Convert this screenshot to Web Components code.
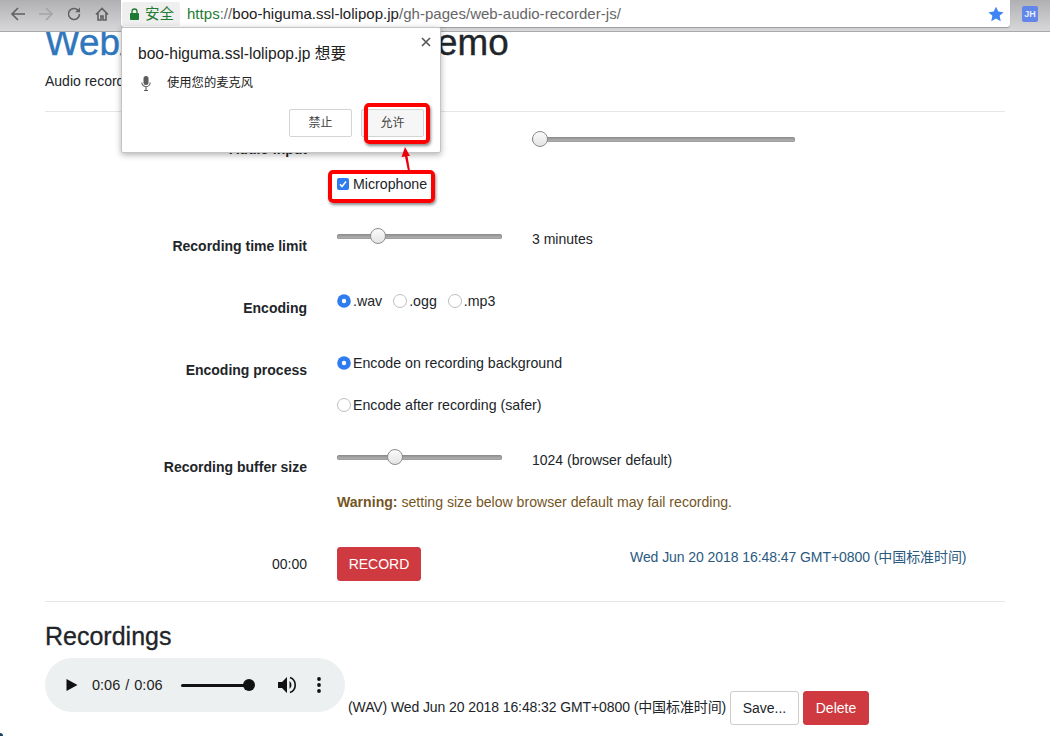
<!DOCTYPE html>
<html>
<head>
<meta charset="utf-8">
<title>Web audio recorder</title>
<style>
  html, body { margin: 0; height: 100%; overflow: hidden; background: #fff; }
  body { font: 14px/20px "Liberation Sans", "Noto Sans CJK SC", sans-serif; color: #212529; position: relative; }
  .speck { position: absolute; left: 0; top: 733px; width: 3px; height: 3px; border-radius: 0 3px 0 0; background: #17435f; }
</style>
</head>
<body>
<browser-bar></browser-bar>
<recorder-page></recorder-page>
<permission-popup></permission-popup>
<div class="speck"></div>
<script>
class BrowserBar extends HTMLElement {
  constructor() {
    super();
    this.attachShadow({mode: 'open'}).innerHTML = `
    <style>
      :host { display: flex; position: relative; z-index: 2; height: 32px; box-sizing: border-box;
        background: linear-gradient(#b0b0b2, #d8d8da); border-bottom: 1px solid #a9a9ab; }
      .nav { width: 121px; display: flex; align-items: center; padding-bottom: 4px; box-sizing: border-box; padding-left: 10px; gap: 12px; }
      .nav svg { width: 16px; height: 16px; fill: none; stroke: #5f6063; stroke-width: 1.6; flex: none; }
      .nav svg.off { stroke: #a5a5a8; }
      .omni { flex: 1; height: 27px; background: #fff; border-radius: 0 0 3px 3px; display: flex; align-items: center;
        box-shadow: 0 1px 1px #9a9a9c; font-size: 15px; color: #666; }
      .chip { width: 58px; height: 24px; margin: 0 7px 0 1px; background: #efefef; border-radius: 2px; display: flex; align-items: center; box-sizing: border-box; padding-left: 8px; gap: 6px; color: #1e7b34; font-size: 14.5px; }
      .green { color: #1e7b34; }
      .host { color: #222; }
      .url { flex: 1; letter-spacing: .03px; }
      .star { width: 16px; height: 16px; fill: #3f86f4; margin-right: 6px; }
      .ext { width: 40px; display: flex; align-items: center; justify-content: center; padding-bottom: 4px; }
      .badge { width: 16px; height: 16px; border-radius: 2px; background: #6286ea; color: #e8eeff; font: bold 9px/16px "Liberation Sans", sans-serif; text-align: center; }
    </style>
    <div class="nav">
      <svg viewBox="0 0 16 16"><path d="M15 8H2M8 2 2 8l6 6"/></svg>
      <svg class="off" viewBox="0 0 16 16"><path d="M1 8h13M8 2l6 6-6 6"/></svg>
      <svg viewBox="0 0 16 16"><path d="M13.5 8a5.5 5.5 0 1 1-1.6-3.9L13.5 6"/><path d="M14 1.5V6.3H9.2" fill="#5f6063" stroke="none"/></svg>
      <svg viewBox="0 0 16 16"><path d="M2 8.5 8 2.5l6 6M4 7v7h3v-4h2v4h3V7"/></svg>
    </div>
    <div class="omni">
      <div class="chip">
        <svg width="9" height="12" viewBox="0 0 9 12"><path d="M2 5V3.500a2.500 2.500 0 0 1 5 0V5" fill="none" stroke="#1e7b34" stroke-width="1.300"/><rect y="5" width="9" height="7" rx="1" fill="#1e7b34"/></svg>
        <span>安全</span>
      </div>
      <div class="url"><span class="green">https</span>://<span class="host">boo-higuma.ssl-lolipop.jp</span>/gh-pages/web-audio-recorder-js/</div>
      <svg class="star" viewBox="0 0 24 24"><path d="M12 1l3.400 7.400 8 .9-6 5.400 1.700 8L12 18.700 4.900 22.700l1.700-8-6-5.400 8-.9z"/></svg>
    </div>
    <div class="ext"><div class="badge">JH</div></div>`;
  }
}

class RangeSlider extends HTMLElement {
  constructor() {
    super();
    this.attachShadow({mode: 'open'}).innerHTML = `
    <style>
      :host { display: block; position: relative; height: 20px; width: var(--w, 165px); flex: none; }
      .track { position: absolute; left: 0; right: 0; top: 7.500px; height: 5px; border-radius: 3px; background: linear-gradient(#8e8e8e, #b9b9b9); box-shadow: inset 0 0 0 .5px #8a8a8a; }
      .thumb { position: absolute; top: 2px; width: 16px; height: 16px; box-sizing: border-box; border-radius: 50%; border: 1px solid #8d8d8d; background: linear-gradient(#fafafa, #e4e4e4); }
    </style>
    <div class="track"></div><div class="thumb"></div>`;
    this.shadowRoot.querySelector('.thumb').style.left = this.getAttribute('at') + 'px';
  }
}

class FormRow extends HTMLElement {
  constructor() {
    super();
    this.attachShadow({mode: 'open'}).innerHTML = `
    <style>
      :host { display: grid; grid-template-columns: 262px 1fr; column-gap: 30px; margin-bottom: 32px; }
      .label { font-weight: bold; text-align: right; padding-top: 10px; color: #212529; }
      :host([plain]) .label { font-weight: normal; }
      .value { min-width: 0; }
    </style>
    <div class="label"><slot name="label"></slot></div>
    <div class="value"><slot></slot></div>`;
  }
}

class ChoiceMark extends HTMLElement {
  constructor() {
    super();
    const checked = this.hasAttribute('checked');
    const box = this.getAttribute('type') === 'checkbox';
    let mark;
    if (box) {
      mark = `<svg width="12" height="12" viewBox="0 0 12 12"><rect width="12" height="12" rx="2" fill="#2f7bf0"/><path d="M3 6.200 5 8.500 9 3.500" fill="none" stroke="#fff" stroke-width="1.500"/></svg>`;
    } else if (checked) {
      mark = `<svg width="14" height="14" viewBox="0 0 14 14"><circle cx="7" cy="7" r="6.800" fill="#2f7bf0"/><circle cx="7" cy="7" r="2.200" fill="#fff"/></svg>`;
    } else {
      mark = `<svg width="14" height="14" viewBox="0 0 14 14"><circle cx="7" cy="7" r="6.500" fill="#fff" stroke="#bdbdbd"/></svg>`;
    }
    this.attachShadow({mode: 'open'}).innerHTML = `
    <style>
      :host { display: inline-flex; align-items: center; height: 20px; margin-right: 11px; gap: 2px; font-size: 14.200px; }
      svg { flex: none; margin-right: ${box ? 2 : 0}px; }
    </style>
    ${mark}<slot></slot>`;
  }
}

class ActionButton extends HTMLElement {
  constructor() {
    super();
    this.attachShadow({mode: 'open'}).innerHTML = `
    <style>
      :host { display: inline-flex; align-items: center; justify-content: center; height: 34px; box-sizing: border-box; border-radius: 3px; flex: none;
        background: #cf3a40; color: #fff; padding: 0 12px; border: 1px solid #cf3a40; }
      :host([plain]) { background: #fff; color: #212529; border-color: #ccc; padding: 0 11.500px; }
    </style>
    <slot></slot>`;
  }
}

class AudioBar extends HTMLElement {
  constructor() {
    super();
    this.attachShadow({mode: 'open'}).innerHTML = `
    <style>
      :host { display: flex; align-items: center; width: 300px; height: 54px; border-radius: 27px; background: #edf0f1; flex: none; box-sizing: border-box; padding-left: 21px; color: #222; font-size: 14.5px; }
      .time { margin-left: 14px; width: 80px; white-space: pre; word-spacing: 1px; }
      .seek { margin-left: 9px; width: 68px; height: 3px; border-radius: 2px; background: #111; position: relative; }
      .seek i { position: absolute; right: -6px; top: -4.500px; width: 12px; height: 12px; border-radius: 50%; background: #111; }
      svg { flex: none; }
    </style>
    <svg width="12" height="14" viewBox="0 0 12 14"><path d="M0.500 1 11.500 7 .5 13z" fill="#111"/></svg>
    <span class="time">0:06 / 0:06</span>
    <div class="seek"><i></i></div>
    <svg style="margin-left:28px" width="20" height="20" viewBox="0 0 20 20"><path d="M1 7v6h4l5 5V2L5 7z" fill="#111"/><path d="M12.500 6a5 5 0 0 1 0 8z" fill="#111"/><path d="M13 2.500a8 8 0 0 1 0 15" fill="none" stroke="#111" stroke-width="1.600"/></svg>
    <svg style="margin-left:20px" width="4" height="16" viewBox="0 0 4 16"><circle cx="2" cy="2" r="1.900" fill="#111"/><circle cx="2" cy="8" r="1.900" fill="#111"/><circle cx="2" cy="14" r="1.900" fill="#111"/></svg>`;
  }
}

class RecorderPage extends HTMLElement {
  constructor() {
    super();
    this.attachShadow({mode: 'open'}).innerHTML = `
    <style>
      :host { display: block; padding: 0 45px; }
      h1 { font-size: 36.800px; line-height: 43px; font-weight: normal; -webkit-text-stroke: .4px; margin: -11px 0 0; color: #212529; white-space: nowrap; }
      h1 a { color: #2f76bd; }
      .lead { margin: 7px 0 0; height: 20px; }
      hr { border: 0; border-top: 1px solid #e6e6e6; margin: 0; }
      .top-rule { margin: 20px 0 17px; }
      .line { height: 20px; display: flex; align-items: center; }
      .slide-line { display: flex; gap: 30px; }
      .slide-line span { line-height: 20px; margin-top: 3px; }
      .mic { margin-top: 25px; }
      .level { margin: 0 0 0 195px; --w: 263px; }
      .opts { padding-top: 3px; display: flex; }
      .opts + .opts { padding-top: 22px; }
      .warn { margin-top: 22px; color: #75561f; font-size: 14.100px; }
      .rec { margin-top: 3px; display: flex; align-items: flex-start; }
      .rec action-button { width: 84px; }
      .stamp { margin-left: 209px; color: #2a5a80; white-space: nowrap; letter-spacing: -.07px; }
      .end-rule { margin-top: -12px; }
      h2 { font-size: 25px; line-height: 29px; font-weight: normal; -webkit-text-stroke: .3px; margin: 20px 0 7px; color: #212529; }
      .take { display: flex; align-items: flex-end; white-space: nowrap; }
      .take audio-bar { margin-bottom: 13px; }
      .take span { margin: 0 4px 8px 3px; letter-spacing: -.1px; }
      .take action-button + action-button { margin-left: 4px; }
    </style>
    <h1><a>WebAudioRecorder.js</a> Demo</h1>
    <p class="lead">Audio recorder</p>
    <hr class="top-rule">
    <form-row>
      <span slot="label">Audio input</span>
      <range-slider class="level" at="0"></range-slider>
      <div class="line mic"><choice-mark type="checkbox" checked>Microphone</choice-mark></div>
    </form-row>
    <form-row>
      <span slot="label">Recording time limit</span>
      <div class="slide-line"><range-slider at="33"></range-slider><span>3 minutes</span></div>
    </form-row>
    <form-row>
      <span slot="label">Encoding</span>
      <div class="opts"><choice-mark checked>.wav</choice-mark><choice-mark>.ogg</choice-mark><choice-mark>.mp3</choice-mark></div>
    </form-row>
    <form-row>
      <span slot="label">Encoding process</span>
      <div class="opts"><choice-mark checked>Encode on recording background</choice-mark></div>
      <div class="opts"><choice-mark>Encode after recording (safer)</choice-mark></div>
    </form-row>
    <form-row>
      <span slot="label">Recording buffer size</span>
      <div class="slide-line"><range-slider at="50"></range-slider><span>1024 (browser default)</span></div>
      <div class="warn"><b>Warning:</b> setting size below browser default may fail recording.</div>
    </form-row>
    <form-row plain>
      <span slot="label">00:00</span>
      <div class="rec"><action-button>RECORD</action-button><span class="stamp">Wed Jun 20 2018 16:48:47 GMT+0800 (中国标准时间)</span></div>
    </form-row>
    <hr class="end-rule">
    <h2>Recordings</h2>
    <div class="take">
      <audio-bar></audio-bar>
      <span>(WAV) Wed Jun 20 2018 16:48:32 GMT+0800 (中国标准时间)</span>
      <action-button plain>Save...</action-button>
      <action-button>Delete</action-button>
    </div>`;
  }
}

class PermissionPopup extends HTMLElement {
  constructor() {
    super();
    this.attachShadow({mode: 'open'}).innerHTML = `
    <style>
      :host { position: absolute; left: 0; top: 0; width: 100%; height: 100%; z-index: 3; pointer-events: none; display: block; }
      .box { position: absolute; left: 121px; top: 27px; width: 320px; height: 126px; box-sizing: border-box; background: #fff; border: 1px solid #c4c4c4; border-radius: 2px;
        box-shadow: 0 2px 6px rgba(0,0,0,.3); display: flex; flex-direction: column; padding: 16px 16px 0; color: #222; }
      .title { line-height: 20px; font-size: 15.600px; }
      .close { position: absolute; right: 9px; top: 9px; width: 10px; height: 10px; }
      .ask { display: flex; align-items: center; gap: 16px; font-size: 12.300px; margin-top: 9px; line-height: 20px; margin-left: 3px; }
      .btns { display: flex; gap: 9px; margin-top: 16px; margin-left: 151px; }
      .btns div { width: 64px; height: 28px; box-sizing: border-box; border: 1px solid #d4d4d4; border-radius: 2px; font-size: 12px; text-align: center; line-height: 26px; color: #444; background: #fff; }
      .btns div + div { background: #f6f6f6; }
      .mark { position: absolute; border: 4px solid #f00; border-radius: 5px; box-sizing: border-box; box-shadow: 1px 2px 3px rgba(0,0,0,.45); }
      .arrow { position: absolute; left: 398px; top: 145px; }
    </style>
    <div class="box">
      <div class="title">boo-higuma.ssl-lolipop.jp 想要</div>
      <svg class="close" viewBox="0 0 10 10"><path d="M1 1l8 8M9 1l-8 8" stroke="#555" stroke-width="1.600"/></svg>
      <div class="ask">
        <svg width="10" height="15" viewBox="0 0 10 15"><rect x="2.500" y="0" width="5" height="9" rx="2.500" fill="#5c5c5c"/><path d="M.8 6.500a4.200 4.200 0 0 0 8.400 0M5 11v4M3 14.500h4" fill="none" stroke="#5c5c5c" stroke-width="1.100"/></svg>
        <span>使用您的麦克风</span>
      </div>
      <div class="btns"><div>禁止</div><div>允许</div></div>
    </div>
    <div class="mark" style="left:364px;top:103px;width:66px;height:41px"></div>
    <div class="mark" style="left:328px;top:170px;width:107px;height:33px"></div>
    <svg class="arrow" width="20" height="28" viewBox="0 0 20 28"><path d="M7 2 12 11 9.500 11 12 26 10 26 7 11.500 3.500 12z" fill="#e8000a"/></svg>`;
  }
}

customElements.define('browser-bar', BrowserBar);
customElements.define('range-slider', RangeSlider);
customElements.define('form-row', FormRow);
customElements.define('choice-mark', ChoiceMark);
customElements.define('action-button', ActionButton);
customElements.define('audio-bar', AudioBar);
customElements.define('recorder-page', RecorderPage);
customElements.define('permission-popup', PermissionPopup);
</script>
</body>
</html>
